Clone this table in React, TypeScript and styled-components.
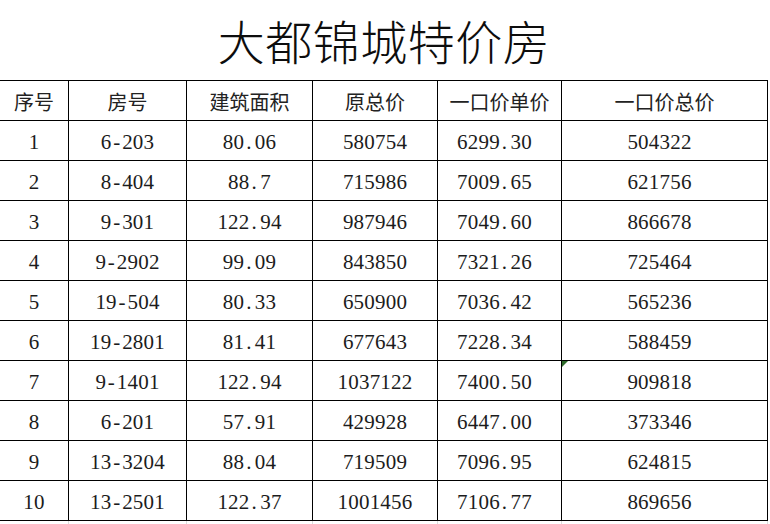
import styled, { createGlobalStyle } from 'styled-components'

const GlobalStyle = createGlobalStyle`
    html, body {
        margin: 0;
        padding: 0;
        background: #fff;
    }
    body {
        font-family: "Liberation Serif", "Noto Sans CJK SC", serif;
        color: #111;
    }
`

const COLUMNS = '69px 118px 126px 125px 124px 206px'

const Page = styled.div`
    width: 770px;
    height: 524px;
    overflow: hidden;
    background: #fff;
`

const Title = styled.h1`
    margin: 0;
    width: 768px;
    height: 80px;
    display: flex;
    align-items: center;
    justify-content: center;
    padding-bottom: 1px;
    box-sizing: border-box;
    font-family: "Noto Sans CJK SC", sans-serif;
    font-weight: 300;
    font-size: 47px;
    letter-spacing: 0.5px;
    color: #0d0d0d;
`

const Grid = styled.div`
    display: grid;
    grid-template-columns: ${COLUMNS};
    grid-auto-rows: 40px;
    width: 768px;
    border-top: 1px solid #000;
`

const HeadCell = styled.div`
    display: flex;
    align-items: center;
    justify-content: center;
    border-right: 1px solid #000;
    border-bottom: 1px solid #000;
    font-family: "Noto Sans CJK SC", sans-serif;
    font-size: 20px;
    color: #222;
    padding-top: 1px;
`

const Cell = styled.div<{ $shift?: number; $marker?: boolean }>`
    position: relative;
    display: flex;
    align-items: center;
    justify-content: center;
    border-right: 1px solid #000;
    border-bottom: 1px solid #000;
    font-family: "Liberation Serif", "Noto Sans CJK SC", serif;
    font-size: 21px;
    letter-spacing: 0.2px;
    color: #1c1c1c;
    padding-top: 3px;
    padding-right: ${(p) => p.$shift ?? 0}px;
    white-space: pre;

    ${(p) => p.$marker && `
        &::before {
            content: '';
            position: absolute;
            left: 0;
            top: 0;
            border-top: 6px solid #2e6b2b;
            border-right: 6px solid transparent;
        }
    `}
`

// half-width slot, like the sheet's monospaced font gives to '.' and '-'
const Slot = styled.span<{ $align: 'left' | 'center' }>`
    display: inline-block;
    width: 10.7px;
    text-align: ${(p) => p.$align};
    padding-left: ${(p) => (p.$align === 'left' ? '2px' : '0')};
    box-sizing: border-box;
`

const GhostRow = styled.div`
    display: grid;
    grid-template-columns: ${COLUMNS};
    width: 768px;
    height: 4px;
`

const GhostCell = styled.div`
    border-right: 1px solid #dcdcdc;
`

const headers = ['序号', '房号', '建筑面积', '原总价', '一口价单价', '一口价总价']

const rows = [
    ['1', '6-203', '80.06', '580754', '6299.30', '504322'],
    ['2', '8-404', '88.7', '715986', '7009.65', '621756'],
    ['3', '9-301', '122.94', '987946', '7049.60', '866678'],
    ['4', '9-2902', '99.09', '843850', '7321.26', '725464'],
    ['5', '19-504', '80.33', '650900', '7036.42', '565236'],
    ['6', '19-2801', '81.41', '677643', '7228.34', '588459'],
    ['7', '9-1401', '122.94', '1037122', '7400.50', '909818'],
    ['8', '6-201', '57.91', '429928', '6447.00', '373346'],
    ['9', '13-3204', '88.04', '719509', '7096.95', '624815'],
    ['10', '13-2501', '122.37', '1001456', '7106.77', '869656'],
]

// the last two columns sit a little left of centre in the sheet
const shifts = [0, 0, 0, 0, 10, 10]

function SheetText({ value }: { value: string }) {
    const parts = value.split(/([.-])/)
    return <>
        {parts.map((part, i) => {
            if (part === '.') return <Slot key={i} $align="left">.</Slot>
            if (part === '-') return <Slot key={i} $align="center">-</Slot>
            return part
        })}
    </>
}

export default function App() {
    return (
        <Page>
            <GlobalStyle />
            <Title>大都锦城特价房</Title>
            <Grid>
                {headers.map((h) => <HeadCell key={h}>{h}</HeadCell>)}
                {rows.map((row, r) =>
                    row.map((value, c) => (
                        <Cell
                            key={`${r}-${c}`}
                            $shift={shifts[c]}
                            $marker={r === 6 && c === 5}
                        >
                            <SheetText value={value} />
                        </Cell>
                    ))
                )}
            </Grid>
            <GhostRow>
                {headers.map((h) => <GhostCell key={h} />)}
            </GhostRow>
        </Page>
    )
}
